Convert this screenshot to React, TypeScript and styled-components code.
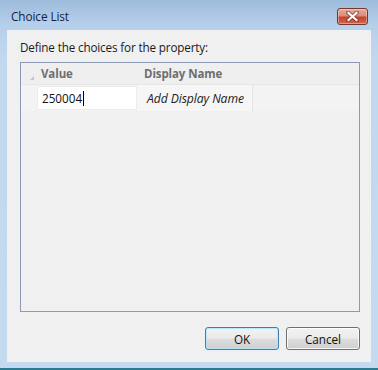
import styled, { createGlobalStyle } from "styled-components";

const GlobalStyle = createGlobalStyle`
  html, body {
    margin: 0;
    padding: 0;
    background: #ffffff;
  }
  body {
    font-family: "Open Sans", "Noto Sans", sans-serif;
    font-size: 12px;
  }
`;

const uiFont = `"Open Sans", "Noto Sans", sans-serif`;

const Window = styled.div`
  width: 378px;
  height: 370px;
  box-sizing: border-box;
  display: flex;
  flex-direction: column;
  background: linear-gradient(
    to bottom,
    #9dbbdb 0px,
    #b6cfea 24px,
    #c2d8ef 60px,
    #c4daf0 100%
  );
  border-bottom: 2px solid #2b7a8f;
`;

const TitleBar = styled.div`
  height: 30px;
  flex: none;
  display: flex;
  justify-content: space-between;
  align-items: flex-start;
  padding: 0 10px 0 11px;
`;

const Title = styled.div`
  font-family: ${uiFont};
  font-size: 11.8px;
  line-height: 16px;
  color: #14243a;
  margin-top: 8px;
  letter-spacing: -0.1px;
`;

const CloseButton = styled.div`
  margin-top: 8px;
  width: 31px;
  height: 17px;
  box-sizing: border-box;
  border: 1px solid #6f3a34;
  border-radius: 3px;
  background: linear-gradient(
    to bottom,
    #e9aa9b 0%,
    #dc8c78 45%,
    #c5452b 55%,
    #d36650 100%
  );
  box-shadow: inset 0 0 0 1px rgba(255, 220, 210, 0.45);
  display: flex;
  align-items: center;
  justify-content: center;
`;

const Client = styled.div`
  flex: 1;
  margin: 0 7px 6px 7px;
  background: #f0f0f0;
  padding: 9px 11px 0 13px;
  display: flex;
  flex-direction: column;
`;

const Prompt = styled.div`
  font-family: ${uiFont};
  font-size: 11.7px;
  line-height: 16px;
  color: #1a1a1a;
  letter-spacing: -0.15px;
`;

const GridBox = styled.div`
  margin-top: 7px;
  height: 250px;
  box-sizing: border-box;
  border: 1px solid #8c9ab3;
  background: #f0f0f0;
  display: flex;
  flex-direction: column;
`;

const HeaderRow = styled.div`
  height: 21px;
  display: flex;
  align-items: stretch;
  background: #efefef;
  border-bottom: 1px solid #e6e6e6;
`;

const RowHeader = styled.div`
  width: 16px;
  flex: none;
  display: flex;
  align-items: flex-end;
  justify-content: flex-end;
  padding: 0 3px 4px 0;
  box-sizing: border-box;
`;

const HeaderCell = styled.div<{ $w?: number; $pad: number }>`
  width: ${(p) => (p.$w ? `${p.$w}px` : "auto")};
  flex: ${(p) => (p.$w ? "none" : "1")};
  padding-left: ${(p) => p.$pad}px;
  box-sizing: border-box;
  font-family: ${uiFont};
  font-weight: 700;
  font-size: 11.5px;
  line-height: 21px;
  color: #6e6e6e;
  letter-spacing: -0.1px;
`;

const DataRow = styled.div`
  height: 26px;
  display: flex;
  align-items: stretch;
  background: #f3f3f3;
`;

const Spacer = styled.div<{ $w?: number }>`
  width: ${(p) => (p.$w ? `${p.$w}px` : "auto")};
  flex: ${(p) => (p.$w ? "none" : "1")};
`;

const ValueBox = styled.div`
  width: 100px;
  flex: none;
  margin: 1px 0;
  box-sizing: border-box;
  background: #ffffff;
  border: 1px solid #ececec;
  display: flex;
  align-items: center;
  padding-left: 4px;
  font-family: ${uiFont};
  font-size: 11.7px;
  color: #111111;
`;

const Caret = styled.span`
  display: inline-block;
  width: 1px;
  height: 15px;
  background: #000000;
  margin-left: 1px;
`;

const NameCell = styled.div`
  width: 116px;
  flex: none;
  box-sizing: border-box;
  background: #f6f6f6;
  border-right: 1px solid #e4e4e4;
  display: flex;
  align-items: center;
  padding-left: 10px;
  font-family: ${uiFont};
  font-style: italic;
  font-size: 12.2px;
  color: #222222;
  letter-spacing: -0.1px;
`;

const ButtonBar = styled.div`
  margin-top: 15px;
  display: flex;
  justify-content: flex-end;
  gap: 7px;
`;

const Button = styled.div<{ $default?: boolean }>`
  width: 74px;
  height: 23px;
  box-sizing: border-box;
  border: 1px solid ${(p) => (p.$default ? "#3c7fb1" : "#707070")};
  border-radius: 3px;
  background: linear-gradient(
    to bottom,
    #f2f2f2 0%,
    #ebebeb 49%,
    #dddddd 51%,
    #cfcfcf 100%
  );
  box-shadow: inset 0 0 0 1px
    ${(p) => (p.$default ? "rgba(180, 230, 250, 0.9)" : "rgba(255, 255, 255, 0.8)")};
  display: flex;
  align-items: center;
  justify-content: center;
  font-family: ${uiFont};
  font-size: 11.7px;
  color: #111111;
`;

function CloseGlyph() {
  return (
    <svg width="13" height="11" viewBox="0 0 13 11">
      <path
        d="M2 1.5 L11 9.5 M11 1.5 L2 9.5"
        stroke="#5a2a24"
        strokeWidth="4"
        strokeLinecap="square"
        opacity="0.55"
      />
      <path
        d="M2.5 2 L10.5 9 M10.5 2 L2.5 9"
        stroke="#ffffff"
        strokeWidth="2.2"
        strokeLinecap="square"
      />
    </svg>
  );
}

function SortGlyph() {
  return (
    <svg width="4" height="4" viewBox="0 0 4 4">
      <path d="M4 0 L4 4 L0 4 Z" fill="#c4c4c4" />
    </svg>
  );
}

export default function App() {
  return (
    <>
      <GlobalStyle />
      <Window>
        <TitleBar>
          <Title>Choice List</Title>
          <CloseButton>
            <CloseGlyph />
          </CloseButton>
        </TitleBar>
        <Client>
          <Prompt>Define the choices for the property:</Prompt>
          <GridBox>
            <HeaderRow>
              <RowHeader>
                <SortGlyph />
              </RowHeader>
              <HeaderCell $w={100} $pad={4}>
                Value
              </HeaderCell>
              <HeaderCell $pad={7}>Display Name</HeaderCell>
            </HeaderRow>
            <DataRow>
              <Spacer $w={16} />
              <ValueBox>
                250004
                <Caret />
              </ValueBox>
              <NameCell>Add Display Name</NameCell>
              <Spacer />
            </DataRow>
          </GridBox>
          <ButtonBar>
            <Button $default>OK</Button>
            <Button>Cancel</Button>
          </ButtonBar>
        </Client>
      </Window>
    </>
  );
}
